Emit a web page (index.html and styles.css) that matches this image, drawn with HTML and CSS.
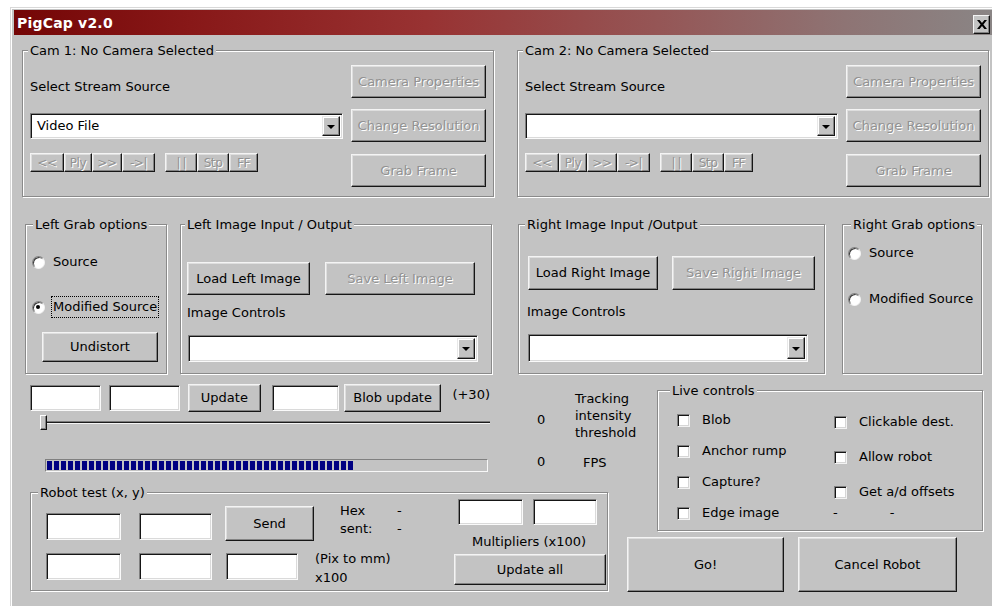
FILE: index.html
```html
<!DOCTYPE html>
<html lang="en">
<head>
<meta charset="utf-8">
<title>PigCap v2.0</title>
<link rel="stylesheet" href="styles.css">
</head>
<body>
<div class="window">
  <header class="titlebar">
    <span class="title">PigCap v2.0</span>
    <span class="close-btn"><svg width="10" height="9" viewBox="0 0 10 9"><path d="M0 0h2.6L5 3l2.4-3H10L6.4 4.5 10 9H7.4L5 6 2.6 9H0l3.6-4.5z"/></svg></span>
  </header>

  <main class="client">
    <!-- camera panels -->
    <div class="cams">
      <section class="group cam">
        <span class="group-label">Cam 1: No Camera Selected</span>
        <div class="cam-body">
          <div class="cam-source">
            <div class="stream-label">Select Stream Source</div>
            <div class="combo"><span class="combo-value">Video File</span><span class="combo-arrow"></span></div>
            <div class="transport">
              <span class="btn mini disabled w34">&lt;&lt;</span>
              <span class="btn mini disabled w28">Ply</span>
              <span class="btn mini disabled w30">&gt;&gt;</span>
              <span class="btn mini disabled w33">-&gt;|</span>
              <span class="btn mini disabled w32 split">| |</span>
              <span class="btn mini disabled w32">Stp</span>
              <span class="btn mini disabled w29">FF</span>
            </div>
          </div>
          <div class="cam-actions">
            <span class="btn disabled">Camera Properties</span>
            <span class="btn disabled">Change Resolution</span>
            <span class="btn disabled">Grab Frame</span>
          </div>
        </div>
      </section>

      <section class="group cam">
        <span class="group-label">Cam 2: No Camera Selected</span>
        <div class="cam-body">
          <div class="cam-source">
            <div class="stream-label">Select Stream Source</div>
            <div class="combo"><span class="combo-value"></span><span class="combo-arrow"></span></div>
            <div class="transport">
              <span class="btn mini disabled w34">&lt;&lt;</span>
              <span class="btn mini disabled w28">Ply</span>
              <span class="btn mini disabled w30">&gt;&gt;</span>
              <span class="btn mini disabled w33">-&gt;|</span>
              <span class="btn mini disabled w32 split">| |</span>
              <span class="btn mini disabled w32">Stp</span>
              <span class="btn mini disabled w29">FF</span>
            </div>
          </div>
          <div class="cam-actions">
            <span class="btn disabled">Camera Properties</span>
            <span class="btn disabled">Change Resolution</span>
            <span class="btn disabled">Grab Frame</span>
          </div>
        </div>
      </section>
    </div>

    <!-- grab options and image input/output -->
    <div class="images">
      <section class="group grab grab-left">
        <span class="group-label">Left Grab options</span>
        <div class="radio-row">
          <span class="radio"></span><span class="radio-text">Source</span>
        </div>
        <div class="radio-row second">
          <span class="radio checked"></span><span class="radio-text focused">Modified Source</span>
        </div>
        <span class="btn undistort">Undistort</span>
      </section>

      <section class="group image-io io-left">
        <span class="group-label">Left Image Input / Output</span>
        <div class="io-buttons">
          <span class="btn load">Load Left Image</span>
          <span class="btn disabled save">Save Left Image</span>
        </div>
        <div class="io-label">Image Controls</div>
        <div class="combo io-combo"><span class="combo-value"></span><span class="combo-arrow"></span></div>
      </section>

      <section class="group image-io io-right">
        <span class="group-label">Right Image Input /Output</span>
        <div class="io-buttons">
          <span class="btn load">Load Right Image</span>
          <span class="btn disabled save">Save Right Image</span>
        </div>
        <div class="io-label">Image Controls</div>
        <div class="combo io-combo"><span class="combo-value"></span><span class="combo-arrow"></span></div>
      </section>

      <section class="group grab grab-right">
        <span class="group-label">Right Grab options</span>
        <div class="radio-row">
          <span class="radio"></span><span class="radio-text">Source</span>
        </div>
        <div class="radio-row second">
          <span class="radio"></span><span class="radio-text">Modified Source</span>
        </div>
      </section>
    </div>

    <!-- tracking, robot and live controls -->
    <div class="lower">
      <div class="lower-left">
        <div class="tracking">
          <div class="tracking-controls">
            <div class="update-row">
              <span class="field w72"></span>
              <span class="field w72 gap8"></span>
              <span class="btn update">Update</span>
              <span class="field w68 gap11"></span>
              <span class="btn blob">Blob update</span>
              <span class="offset">(+30)</span>
            </div>
            <div class="slider">
              <div class="slider-track"></div>
              <span class="slider-thumb"></span>
            </div>
            <div class="progress"><div class="progress-fill"></div></div>
          </div>
          <div class="readouts">
            <span class="value threshold-value">0</span>
            <span class="readout-label">Tracking<br>intensity<br>threshold</span>
            <span class="value fps-value">0</span>
            <span class="readout-label fps">FPS</span>
          </div>
        </div>

        <section class="group robot">
          <span class="group-label">Robot test (x, y)</span>
          <div class="robot-body">
            <div class="robot-left">
              <div class="robot-row">
                <span class="field rf w75"></span>
                <span class="field rf w73 gap18"></span>
                <span class="btn send">Send</span>
                <span class="hex">Hex<br>sent:</span>
                <span class="hex-values">-<br>-</span>
              </div>
              <div class="robot-row second">
                <span class="field rf w75"></span>
                <span class="field rf w73 gap18"></span>
                <span class="field rf w72 gap14"></span>
                <span class="scale">(Pix to mm)<br>x100</span>
              </div>
            </div>
            <div class="robot-right">
              <div class="mult-fields">
                <span class="field w65"></span>
                <span class="field w64"></span>
              </div>
              <div class="mult-label">Multipliers (x100)</div>
              <span class="btn update-all">Update all</span>
            </div>
          </div>
        </section>
      </div>

      <div class="lower-right">
        <section class="group live">
          <span class="group-label">Live controls</span>
          <div class="live-body">
            <div class="live-col first">
              <label class="check"><span class="box"></span>Blob</label>
              <label class="check"><span class="box"></span>Anchor rump</label>
              <label class="check"><span class="box"></span>Capture?</label>
              <label class="check"><span class="box"></span>Edge image</label>
            </div>
            <div class="live-col second">
              <label class="check"><span class="box"></span>Clickable dest.</label>
              <label class="check"><span class="box"></span>Allow robot</label>
              <label class="check"><span class="box"></span>Get a/d offsets</label>
              <div class="ad-values"><span>-</span><span>-</span></div>
            </div>
          </div>
        </section>
        <div class="robot-actions">
          <span class="btn go">Go!</span>
          <span class="btn cancel">Cancel Robot</span>
        </div>
      </div>
    </div>
  </main>
</div>
</body>
</html>
```

FILE: styles.css
```css
* { box-sizing: border-box; }

html, body {
  margin: 0;
  padding: 0;
  background: #fff;
  overflow: hidden;
}

body {
  width: 992px;
  height: 606px;
  font-family: "DejaVu Sans", Verdana, sans-serif;
  font-size: 13px;
  line-height: 16px;
  color: #000;
}

/* ---------- window frame ---------- */
.window {
  margin: 7px 0 0 10px;
  width: 982px;
  height: 599px;
  overflow: hidden;
  padding: 2px 0 0 3px;
  background: #c3c3c3;
  border-top: 1px solid #d8d8d8;
  border-left: 1px solid #d8d8d8;
  box-shadow: inset 1px 1px 0 #fff;
}

.titlebar {
  width: 978px;
  height: 25px;
  display: flex;
  align-items: center;
  justify-content: space-between;
  padding: 0 2px 0 3px;
  background: linear-gradient(to right, #740606 0%, #881818 18%, #983232 42%, #955656 66%, #8e7474 85%, #8a8585 100%);
}

.title {
  color: #fff;
  font-weight: bold;
  font-size: 14px;
  letter-spacing: 0.2px;
}

.close-btn {
  width: 17px;
  height: 19px;
  margin-top: 3px;
  display: flex;
  align-items: center;
  justify-content: center;
  background: #c3c3c3;
  border: 1px solid;
  border-color: #f4f4f4 #111 #111 #f4f4f4;
  box-shadow: inset -1px -1px 0 #808080;
}

.close-btn svg { fill: #000; display: block; }

.client {
  padding: 15px 0 0 8px;
}

/* ---------- shared controls ---------- */
.group {
  position: relative;
  border: 1px solid #8a8a8a;
  box-shadow: inset 1px 1px 0 #fff, 1px 1px 0 #fff;
}

.group-label {
  position: absolute;
  top: -8px;
  left: 5px;
  padding: 0 2px;
  background: #c3c3c3;
  white-space: nowrap;
}

.btn {
  display: flex;
  align-items: center;
  justify-content: center;
  white-space: nowrap;
  background: #c3c3c3;
  border: 1px solid;
  border-color: #f4f4f4 #161616 #161616 #f4f4f4;
  box-shadow: inset -1px -1px 0 #838383, inset 1px 1px 0 #dedede;
}

.btn.disabled {
  color: #929292;
  text-shadow: 1px 1px 0 #fff;
}

.field {
  display: block;
  height: 26px;
  background: #fff;
  border: 1px solid;
  border-color: #808080 #fafafa #fafafa #808080;
  box-shadow: inset 1px 1px 0 #151515, inset -1px -1px 0 #dadada;
}

.combo {
  display: flex;
  align-items: stretch;
  height: 26px;
  padding: 2px;
  background: #fff;
  border: 1px solid;
  border-color: #808080 #fafafa #fafafa #808080;
  box-shadow: inset 1px 1px 0 #151515, inset -1px -1px 0 #dadada;
}

.combo-value {
  flex: 1;
  padding-left: 4px;
  line-height: 20px;
}

.combo-arrow {
  width: 18px;
  display: flex;
  align-items: center;
  justify-content: center;
  background: #c3c3c3;
  border: 1px solid;
  border-color: #e8e8e8 #161616 #161616 #e8e8e8;
  box-shadow: inset -1px -1px 0 #838383, inset 1px 1px 0 #fff;
}

.combo-arrow::after {
  content: "";
  border-left: 4px solid transparent;
  border-right: 4px solid transparent;
  border-top: 4px solid #000;
  margin-top: 1px;
}

.radio-row {
  display: flex;
  align-items: center;
  gap: 6px;
}

.radio {
  position: relative;
  width: 13px;
  height: 13px;
  flex: none;
  border-radius: 50%;
  background: #fff;
  border: 1px solid;
  border-color: #808080 #f2f2f2 #f2f2f2 #808080;
  box-shadow: inset 1px 1px 0 #3a3a3a;
}

.radio.checked::after {
  content: "";
  position: absolute;
  left: 3px;
  top: 3px;
  width: 4px;
  height: 4px;
  border-radius: 50%;
  background: #000;
}

.radio-text {
  padding: 2px 1px;
  border: 1px dotted transparent;
  white-space: nowrap;
}

.radio-text.focused { border-color: #000; }

.check {
  display: flex;
  align-items: center;
  gap: 12px;
  white-space: nowrap;
}

.box {
  width: 13px;
  height: 13px;
  flex: none;
  background: #fff;
  border: 1px solid;
  border-color: #808080 #f2f2f2 #f2f2f2 #808080;
  box-shadow: inset 1px 1px 0 #151515, inset -1px -1px 0 #d6d6d6;
}

/* ---------- camera panels ---------- */
.cams {
  display: flex;
  gap: 23px;
}

.cam { width: 472px; }

.cam-body {
  display: grid;
  grid-template-columns: 313px 135px;
  column-gap: 8px;
  padding: 14px 7px 9px 7px;
}

.cam-source { display: flex; flex-direction: column; }

.stream-label { margin-top: 14px; }

.cam-source .combo { margin-top: 18px; }

.transport {
  display: flex;
  margin-top: 14px;
}

.btn.mini {
  height: 19px;
  font-size: 12px;
  line-height: 12px;
  letter-spacing: -0.4px;
}

.w28 { width: 28px; }
.w29 { width: 29px; }
.w30 { width: 30px; }
.w32 { width: 32px; }
.w33 { width: 33px; }
.w34 { width: 34px; }

.btn.split { margin-left: 10px; letter-spacing: -1px; }

.cam-actions { display: flex; flex-direction: column; }
.cam-actions .btn { height: 33px; }
.cam-actions .btn:nth-child(2) { margin-top: 11px; }
.cam-actions .btn:nth-child(3) { margin-top: 12px; }

/* ---------- grab options / image i/o ---------- */
.images {
  display: flex;
  margin: 27px 0 0 3px;
}

.images .group { height: 150px; }

.grab-left { width: 142px; padding: 26px 0 0 6px; }
.grab-left .group-label { left: 7px; }
.grab-left .radio-row.second { margin-top: 23px; }

.undistort {
  width: 116px;
  height: 30px;
  margin: 14px 0 0 10px;
}

.image-io { display: flex; flex-direction: column; }

.io-buttons { display: flex; align-items: flex-end; }

.io-left {
  width: 312px;
  margin-left: 13px;
  padding: 37px 0 0 6px;
}
.io-left .group-label { left: 4px; }
.io-left .load { width: 123px; height: 33px; }
.io-left .save { width: 150px; height: 33px; margin-left: 15px; }
.io-left .io-label { margin-top: 10px; }
.io-left .io-combo { width: 290px; height: 27px; margin: 14px 0 0 1px; }

.io-right {
  width: 307px;
  margin-left: 26px;
  padding: 31px 0 0 9px;
}
.io-right .group-label { left: 6px; }
.io-right .load { width: 130px; height: 34px; }
.io-right .save { width: 143px; height: 34px; margin-left: 14px; }
.io-right .io-label { margin-top: 14px; margin-left: -1px; }
.io-right .io-combo { width: 280px; height: 28px; margin-top: 14px; }

.grab-right { width: 140px; margin-left: 17px; padding: 17px 0 0 5px; }
.grab-right .group-label { left: 8px; }
.grab-right .radio-row.second { margin-top: 24px; }

/* ---------- lower area ---------- */
.lower {
  display: flex;
  gap: 19px;
  margin: 10px 0 0 8px;
}

.lower-left { width: 578px; }

.tracking { display: flex; height: 88px; }

.tracking-controls { width: 460px; }

.update-row {
  display: flex;
  align-items: flex-start;
  height: 28px;
}

.update-row .field { margin-top: 1px; }

.w64 { width: 64px; }
.w65 { width: 65px; }
.w68 { width: 68px; }
.w72 { width: 72px; }
.w73 { width: 73px; }
.w75 { width: 75px; }
.gap8 { margin-left: 8px; }
.gap11 { margin-left: 11px; }
.gap14 { margin-left: 14px; }
.gap18 { margin-left: 18px; }

.btn.update { width: 74px; height: 28px; margin-left: 8px; }
.btn.blob { width: 99px; height: 28px; margin-left: 5px; }
.offset { margin: 3px 0 0 11px; white-space: nowrap; }

.slider {
  position: relative;
  width: 450px;
  height: 17px;
  margin: 3px 0 0 10px;
}

.slider-track {
  position: relative;
  top: 6px;
  height: 3px;
  background: #1c1c1c;
  border-top: 1px solid #7a7a7a;
  border-bottom: 1px solid #f4f4f4;
}

.slider-thumb {
  position: absolute;
  left: 0;
  top: 0;
  width: 7px;
  height: 15px;
  background: #c3c3c3;
  border: 1px solid;
  border-color: #fff #111 #111 #fff;
  box-shadow: inset -1px -1px 0 #808080;
}

.progress {
  width: 443px;
  height: 13px;
  margin: 27px 0 0 15px;
  padding: 1px;
  border: 1px solid;
  border-color: #808080 #f8f8f8 #f8f8f8 #808080;
}

.progress-fill {
  width: 306px;
  height: 100%;
  background: repeating-linear-gradient(to right, #000082 0 5px, transparent 5px 7px);
}

.readouts {
  display: grid;
  grid-template-columns: 38px auto;
  align-content: start;
  margin-left: 47px;
  padding-top: 6px;
}

.readout-label { line-height: 17px; }
.threshold-value { margin-top: 22px; }
.fps-value, .readout-label.fps { margin-top: 13px; }
.readout-label.fps { margin-left: 8px; }

/* robot test */
.robot { margin-top: 20px; }
.robot .group-label { left: 7px; }

.robot-body {
  display: flex;
  padding: 6px 1px 3px 15px;
}

.robot-left { margin-top: 3px; }

.robot-row {
  display: flex;
  align-items: flex-start;
  height: 39px;
}

.robot-row .rf { height: 27px; margin-top: 11px; }

.robot-row.second { margin-top: 8px; height: 38px; }
.robot-row.second .rf { margin-top: 4px; }

.btn.send {
  width: 89px;
  height: 35px;
  margin: 4px 0 0 13px;
}

.hex {
  width: 57px;
  margin-left: 26px;
  line-height: 18px;
}

.hex-values { line-height: 18px; }

.scale {
  margin-left: 17px;
  line-height: 19px;
  white-space: nowrap;
}

.robot-right {
  width: 152px;
  margin-left: auto;
}

.mult-fields { display: flex; gap: 10px; margin-left: 4px; }
.mult-label { margin: 9px 0 0 18px; white-space: nowrap; }
.btn.update-all { height: 31px; margin-top: 4px; }

/* live controls */
.lower-right { width: 356px; }

.live {
  width: 326px;
  margin: 6px 0 0 30px;
}
.live .group-label { left: 12px; }

.live-body {
  display: flex;
  padding: 21px 0 9px 19px;
}

.live-col { display: flex; flex-direction: column; }
.live-col.first { width: 157px; gap: 15px; }
.live-col.second { gap: 19px; padding-top: 2px; }

.ad-values {
  display: flex;
  gap: 52px;
  margin: -14px 0 0 -1px;
}

.robot-actions {
  display: flex;
  gap: 14px;
  margin-top: 6px;
}

.btn.go { width: 157px; height: 55px; }
.btn.cancel { width: 159px; height: 55px; }
```
